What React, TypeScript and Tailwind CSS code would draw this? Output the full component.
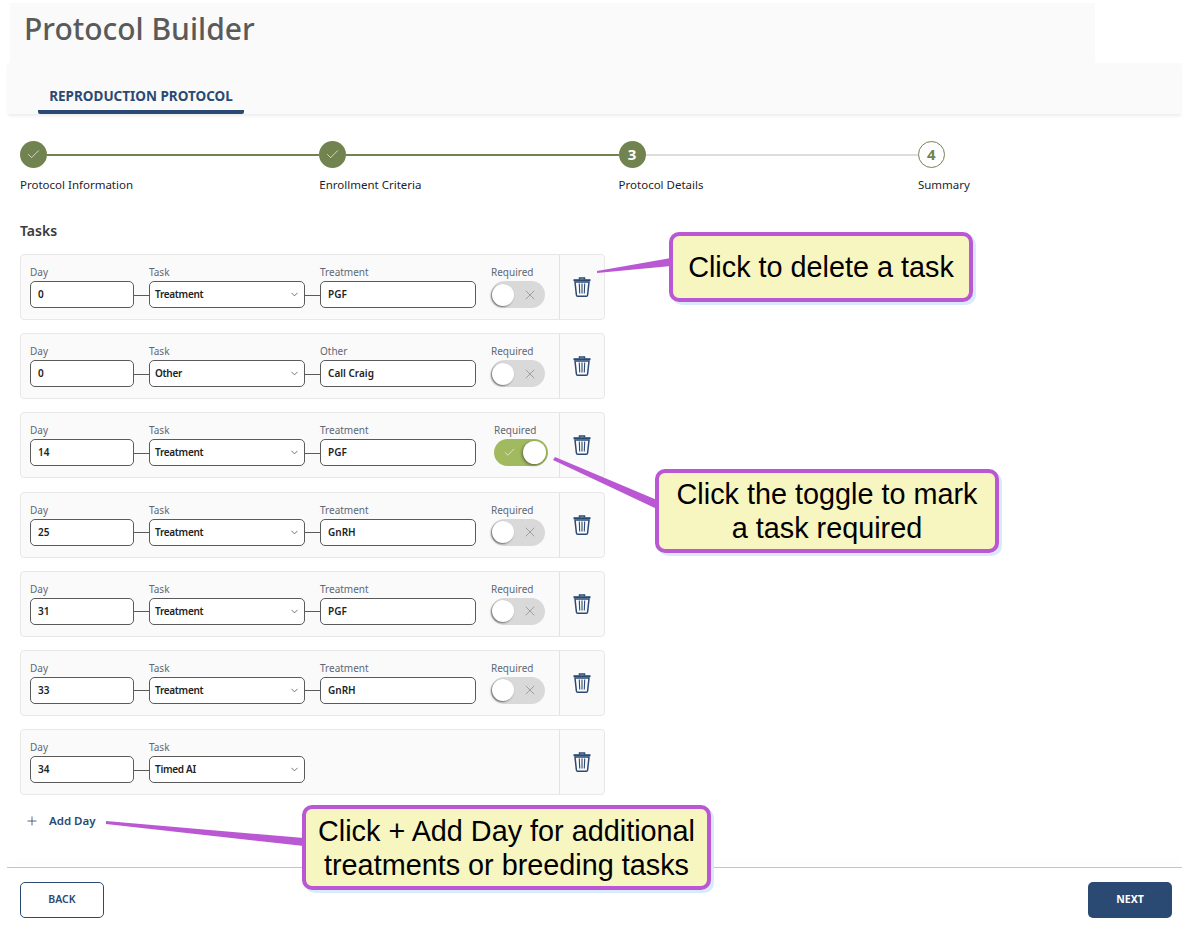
import React from "react";
import { Check, ChevronDown, Plus, X } from "lucide-react";

const font = { fontFamily: '"Noto Sans", sans-serif' };

function Trash() {
  return (
    <svg width="18" height="20" viewBox="0 0 18 20" fill="none" stroke="#2a4a73" strokeWidth="1.5">
      <path d="M6.5 2.6V1h5v1.6" />
      <path d="M0.5 3.2h17" strokeWidth="2" />
      <path d="M2 5l1.4 13c.1.7.5 1.2 1.2 1.2h8.8c.7 0 1.1-.5 1.2-1.2L16 5z" />
      <path d="M6.3 6.5l.4 10M9 6.5v10M11.7 6.5l-.4 10" strokeWidth="1.1" />
    </svg>
  );
}

function Toggle({ on }: { on: boolean }) {
  if (on) {
    return (
      <div className="ml-[3px] flex h-[27px] w-[54px] items-center justify-between rounded-full bg-[#a1ba5f] pl-[9px] pr-[2px]">
        <Check size={13} strokeWidth={1.1} className="text-white" />
        <div className="h-[23px] w-[23px] rounded-full bg-white shadow-[-1px_1px_3px_rgba(0,0,0,0.45)]" />
      </div>
    );
  }
  return (
    <div className="flex h-[27px] w-[54px] items-center justify-between rounded-full bg-[#d9d9d9] pl-[1px] pr-[7px]">
      <div className="h-[22px] w-[22px] rounded-full bg-white shadow-[-1px_1px_2px_rgba(0,0,0,0.5)]" />
      <X size={16} strokeWidth={0.9} className="text-[#777777]" />
    </div>
  );
}

type RowData = { day: string; task: string; label?: string; value?: string; on?: boolean };

function Field({ label, width, children }: { label: string; width: string; children: React.ReactNode }) {
  return (
    <div className={`flex flex-col ${width}`}>
      <div className="h-[16px] text-[10px] leading-[16px] text-[#5d6876]">{label}</div>
      <div className="mt-[1px] flex h-[27px] items-center justify-between rounded-[5px] border border-[#5a5a5a] bg-white text-[10px] font-semibold text-[#222222]">
        {children}
      </div>
    </div>
  );
}

function Row({ row }: { row: RowData }) {
  return (
    <div className="flex h-[66px] w-[585px] rounded-[4px] border border-[#e8e8e8] bg-[#fafafa]">
      <div className="flex flex-1 items-start pl-[9px] pt-[9px]">
        <Field label="Day" width="w-[104px]">
          <span className="pl-[7px]">{row.day}</span>
        </Field>
        <div className="mt-[30.5px] h-px w-[15px] bg-[#5a5a5a]" />
        <Field label="Task" width="w-[156px]">
          <span className="pl-[5px] tracking-[-0.3px]">{row.task}</span>
          <ChevronDown size={11} strokeWidth={1.6} className="mr-[4px] text-[#444444]" />
        </Field>
        {row.label && (
          <>
            <div className="mt-[30.5px] h-px w-[15px] bg-[#5a5a5a]" />
            <Field label={row.label} width="w-[156px]">
              <span className="pl-[7px]">{row.value}</span>
            </Field>
            <div className="ml-[15px] flex w-[60px] flex-col">
              <div className={`h-[16px] text-[10px] leading-[16px] text-[#5d6876] ${row.on ? "ml-[3px]" : ""}`}>
                Required
              </div>
              <div className="mt-[1px]">
                <Toggle on={!!row.on} />
              </div>
            </div>
          </>
        )}
      </div>
      <div className="flex w-[45px] items-center justify-center border-l border-[#e3e3e3]">
        <Trash />
      </div>
    </div>
  );
}

const rows: RowData[] = [
  { day: "0", task: "Treatment", label: "Treatment", value: "PGF" },
  { day: "0", task: "Other", label: "Other", value: "Call Craig" },
  { day: "14", task: "Treatment", label: "Treatment", value: "PGF", on: true },
  { day: "25", task: "Treatment", label: "Treatment", value: "GnRH" },
  { day: "31", task: "Treatment", label: "Treatment", value: "PGF" },
  { day: "33", task: "Treatment", label: "Treatment", value: "GnRH" },
  { day: "34", task: "Timed AI" },
];

const steps = [
  { label: "Protocol Information", state: "done", line: true },
  { label: "Enrollment Criteria", state: "done", line: true },
  { label: "Protocol Details", state: "current", mark: "3", line: false },
  { label: "Summary", state: "todo", mark: "4", line: false },
];

function Step({ s, last }: { s: (typeof steps)[number]; last: boolean }) {
  return (
    <div className={last ? "w-[60px]" : "w-[299.3px]"}>
      <div className="flex items-center">
        {s.state === "todo" ? (
          <div className="flex h-[27px] w-[27px] shrink-0 items-center justify-center rounded-full border border-[#71844f] bg-white text-[15px] font-bold text-[#71844f]">
            {s.mark}
          </div>
        ) : (
          <div className="flex h-[27px] w-[27px] shrink-0 items-center justify-center rounded-full bg-[#71844f] text-[15px] font-bold text-white">
            {s.state === "done" ? <Check size={15} strokeWidth={1.1} /> : s.mark}
          </div>
        )}
        {!last && <div className={`h-[2px] flex-1 ${s.line ? "bg-[#71844f]" : "bg-[#dcdcdc]"}`} />}
      </div>
      <div className="mt-[8px] whitespace-nowrap text-[11.5px] leading-[17px] text-[#1d1d2b]">{s.label}</div>
    </div>
  );
}

function Callout({ className, children }: { className: string; children: React.ReactNode }) {
  return (
    <div
      className={`absolute flex items-center justify-center rounded-[10px] border-[4px] border-[#b958d2] bg-[#f7f5c0] text-center text-[28.8px] leading-[34px] text-black shadow-[3px_3px_0_#d9eaff] ${className}`}
      style={{ fontFamily: '"Liberation Sans", Arial, sans-serif' }}
    >
      {children}
    </div>
  );
}

export default function App() {
  return (
    <div className="relative h-[937px] w-[1192px] overflow-hidden bg-white" style={font}>
      <div className="ml-[10px] mt-[3px] flex h-[60px] w-[1085px] items-start bg-[#fafafa] pl-[14px] pt-[5px] text-[30px] font-medium leading-[42px] text-[#5a5a5a]">
        Protocol Builder
      </div>
      <div className="ml-[7px] h-[51px] w-[1175px] bg-[#fafafa] pl-[31px] shadow-[0_3px_3px_-1px_rgba(0,0,0,0.08)]">
        <div className="flex h-full w-[206px] items-end justify-center rounded-b-[2px] border-b-[4px] border-[#2a4a73] pb-[4px] text-[13.5px] font-bold leading-[20px] text-[#2a4a73]">
          REPRODUCTION PROTOCOL
        </div>
      </div>

      <div className="ml-[20px] mt-[27px] flex">
        {steps.map((s, i) => (
          <Step key={s.label} s={s} last={i === steps.length - 1} />
        ))}
      </div>

      <div className="ml-[20px] mt-[28px] text-[14px] font-semibold leading-[20px] text-[#3a3a3a]">Tasks</div>

      <div className="ml-[20px] mt-[13px] flex flex-col gap-[13.2px]">
        {rows.map((r, i) => (
          <Row key={i} row={r} />
        ))}
      </div>

      <div className="ml-[25px] mt-[15.5px] flex h-[20px] items-center gap-[10px] text-[11.5px] font-semibold text-[#2a4a73]">
        <Plus size={14} strokeWidth={1.4} className="text-[#2a4a73]" />
        Add Day
      </div>

      <div className="ml-[7px] mt-[36.5px] h-[2px] w-[1175px] border-t border-[#c4c4c4] shadow-[0_-6px_8px_rgba(0,0,0,0.03)]" />

      <div className="mx-[20px] mt-[13px] flex justify-between">
        <div className="flex h-[36px] w-[84px] items-center justify-center rounded-[5px] border border-[#2a4a73] bg-white text-[10.5px] font-semibold text-[#2a4a73]">
          BACK
        </div>
        <div className="flex h-[36px] w-[84px] items-center justify-center rounded-[5px] bg-[#2a4a73] text-[10.5px] font-bold text-white">
          NEXT
        </div>
      </div>

      <svg className="absolute left-0 top-0" width="1192" height="937" fill="#b958d2">
        <polygon points="597,271 597,273 671,266 671,258" />
        <polygon points="553,460 555,457 657,500 657,509" />
        <polygon points="106,821 106,824 304,846 304,838" />
      </svg>

      <Callout className="left-[669px] top-[232px] h-[70px] w-[304px]">Click to delete a task</Callout>
      <Callout className="left-[655px] top-[469px] h-[84px] w-[344px]">
        Click the toggle to mark
        <br />a task required
      </Callout>
      <Callout className="left-[302px] top-[805px] h-[85px] w-[409px]">
        Click + Add Day for additional
        <br />
        treatments or breeding tasks
      </Callout>
    </div>
  );
}
